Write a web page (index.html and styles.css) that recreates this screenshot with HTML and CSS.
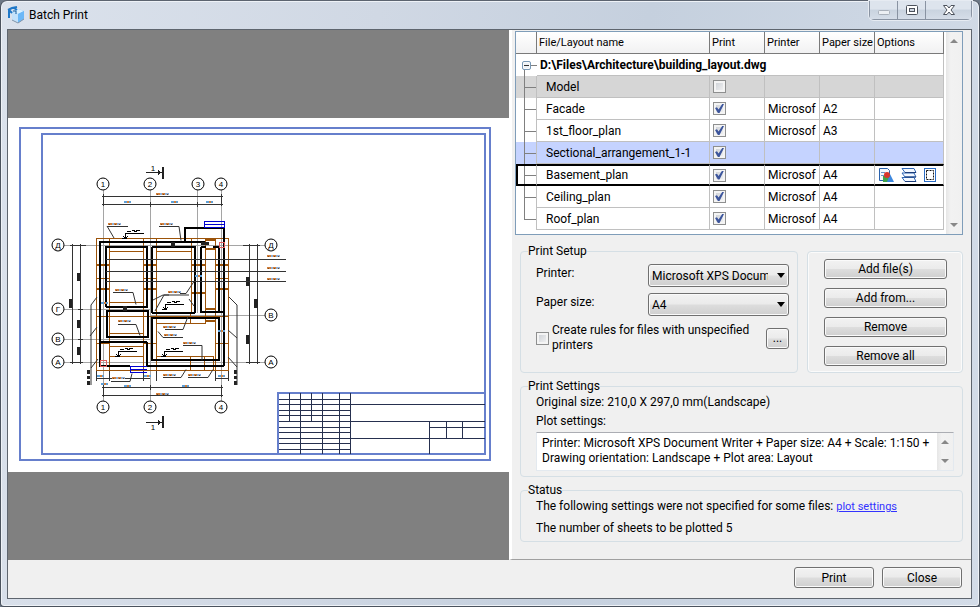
FILE: index.html
```
<!DOCTYPE html>
<html lang="en">
<head>
  <title>Batch Print</title>
  <meta charset="UTF-8">
  <meta name="viewport" content="width=device-width, initial-scale=1.0">
  <link rel="stylesheet" href="styles.css">
</head>
<body>
  <div class="window">
    <header class="titlebar">
      <svg class="app-icon" width="18" height="18" viewBox="0 0 18 18">
        <path d="M5 6l6-3 6 2v8l-6 4-6-3z" fill="#7cc4fa"/>
        <path d="M5 6l6-3 6 2-6 3z" fill="#d9f0ff"/>
        <path d="M5 6l6 2v9l-6-3z" fill="#c3e2fb"/>
        <path d="M11 8l6-3v8l-6 4z" fill="#6bb8f7"/>
        <path d="M1 4l4-2 5-1M2 3v9M2 4l3 3M7 2l3 2M1 11h2" fill="none" stroke="#1f78c8" stroke-width="2"/>
        <path d="M6 5h3v3" fill="none" stroke="#155a9c"/>
        <path d="M5 14l6 3 6-4" fill="none" stroke="#8595a8"/>
      </svg>
      <h1>Batch Print</h1>
      <div class="caption-buttons">
        <button type="button" aria-label="Minimize" disabled>
          <svg width="14" height="12" viewBox="0 0 14 12"><rect x="1.5" y="6.5" width="11" height="4" rx="1" fill="#eceff3" stroke="#a9b0ba"/></svg>
        </button>
        <button type="button" aria-label="Maximize">
          <svg width="14" height="12" viewBox="0 0 14 12"><rect x="1.5" y="1.5" width="11" height="9" rx="1" fill="#fff" stroke="#4c525c"/><rect x="4.5" y="4.5" width="5" height="3" fill="#d0d7e2" stroke="#4c525c"/></svg>
        </button>
        <button type="button" class="close" aria-label="Close window">
          <svg width="14" height="12" viewBox="0 0 14 12"><path d="M1.500 1.500h3.500l2 2.500 2-2.500h3.500l-3.500 4.500 3.500 4.500h-3.500l-2-2.500-2 2.500h-3.500l3.500-4.500z" fill="#fff" stroke="#4c525c"/></svg>
        </button>
      </div>
    </header>

    <main class="client">
      <div class="panes">
        <section class="preview">
          <svg class="sheet" viewBox="8 118 501 354" role="img" aria-label="Basement plan preview">
            <defs>
              <g id="mark" fill="none">
                <path d="M0 0h4M6 0h3" stroke="#d2803c" stroke-width="2"/>
                <path d="M4 0h2M9 0h4" stroke="#8fb0d8" stroke-width="2"/>
                <path d="M1 .5h1M7 .5h1M11 .5h1" stroke="#7a4a20"/>
              </g>
              <g id="dim" fill="none">
                <path d="M0 0h3M5 0h2" stroke="#5fa0d8" stroke-width="2"/>
                <path d="M3 0h2" stroke="#d2803c" stroke-width="2"/>
              </g>
              <g id="level">
                <path d="M0 5.500h5M3.500 0v5M3 .5h19M1 3l2.500 2 2.500-2" fill="none" stroke="#000"/>
                <path d="M5-1.500h4M10-2.500h2v1h2v-1h4" fill="none" stroke="#000"/>
              </g>
            </defs>
            <rect class="paper" x="8" y="118" width="501" height="354"/>

            <!-- frame -->
            <g class="frame">
              <rect x="20" y="128" width="470" height="332"/>
              <path d="M42 134H485V454H42zM278 454V393H485"/>
            </g>

            <!-- title block -->
            <path class="stamp" d="M289.500 393v28M300.500 393v61M311.500 393v28M322.500 393v61M339.500 393v61M350.500 393v61
              M279 399.500h71M279 404.500h206M279 410.500h71M279 415.500h71M279 421.500h206M279 427.500h71M279 432.500h71
              M279 438.500h206M279 443.500h71M279 449.500h71M429.500 421v33M446.500 421v17M462.500 421v17M429 427.500h56"/>

            <!-- axes -->
            <path class="axis" d="M103.500 190v211M150.500 190v211M197.500 190v123M221.500 190v211
              M64 245.500h201M64 309.500h87M64 339.500h87M64 362.500h201M150 315.500h115"/>

            <!-- dimension chains -->
            <path class="thin" d="M102 196.500h121M102 204.500h121M103.500 194v12M150.500 202v5M197.500 202v5M221.500 194v12
              M102 387.500h121M102 395.500h121M103.500 385v12M150.500 385v5M221.500 385v12
              M72.500 244v120M80.500 244v120M249.500 244v120M257.500 244v120
              M70 245.500h16M78 309.500h5M78 339.500h5M70 362.500h13M243 245.500h17M246 362.500h14M96 378.500h54M216 378.500h13
              M96.500 371v10M109.500 371v10M143.500 371v10M156.500 371v10M215.500 371v10M228.500 371v10"/>
            <path class="blocks" d="M77 273h3v8h-3zM69 299h3v9h-3zM77 320h3v8h-3zM77 347h3v8h-3zM246 277h4v9h-4zM254 299h4v9h-4zM246 335h3v9h-3z
              M87 370h3v4h-3zM87 376h3v3h-3zM87 381h3v4h-3zM234 370h3v4h-3zM234 376h3v3h-3zM234 381h3v4h-3z"/>

            <!-- timber -->
            <path class="timber" d="M96.500 238.500H228.500V370.500H96.500zM109.500 238v132M143.500 238v132M156.500 238v132M191.500 238v75M205.500 238v85M215.500 238v132
              M109 251.500h34M156 251.500h35M96 278.500h13M143 278.500h13M215 278.500h13M96 316.500h132M109 302.500h34M109 333.500h34M109 346.500h34
              M109 356.500h34M156 323.500h50M156 356.500h58M190.500 357v13M204.500 357v13M213.500 357v13M96 343.500h13M143 343.500h13M215 343.500h13M190.500 313v10"/>
            <path class="timber beam" d="M96 265h13M143 265h13M191 265h14M215 265h13M96 289h13M143 289h13M191 293h14M215 289h13M206 309h9M206 312h9M206 240h9M206 249h9M206 321h9"/>

            <!-- walls -->
            <path class="wall" d="M100 241v101M99 242h86M106 246v61M106 247h41M147 246v61M106 307h42M152 247v66M152 247h43M152 313h43M195 246v67
              M107 311h41v26h-41zM99 342h48M100 342v24M147 342v24M99 366h31M147 366h77M224 227v139M185 228h39M185 227v15M185 242h20
              M201 247v66M201 312h23M219 247v66M201 247h5M213 247h6M152 318h67v42h-67z"/>
            <path class="floor" d="M106 259.500h180M106 271.500h180M106 281.500h180"/>
            <path class="window-line" d="M204.500 221.500h20v6h-20zM204 224.500h20M130 366.500h17M130 369.500h17M130 372.500h17M130.500 366v7"/>
            <path class="blocks" d="M171 242h4v5h-4zM201 242h8v3h-8zM123 306h4v5h-4z"/>
            <rect class="origin" x="219.500" y="242.500" width="5" height="5"/>
            <rect class="origin" x="100.500" y="360.500" width="6" height="6"/>

            <!-- leaders -->
            <path class="leader" d="M107 226.500h21M107 226l7 12M159 226.500h20l2 14M113 292.500h20l3 12M155 311l9-16h25M180 293.500h6l8-12M118 324.500h18l4 11
              M165 329.500h18l5-13M183 337.500h-20l-5-6M183 345.500h19v15M111 381.500h19l2-8M163 377.500h18l5-8M188 377.500h20l5-8
              M97 297l-6 8v80M90 336l7-9M91 368l7-9M229 297l8 8v80M228 330l9 8M228 357l9 10M189 299l5 7M153 300l10-5 6 0"/>
            <g>
              <use href="#mark" x="108" y="224"/><use href="#mark" x="160" y="224"/>
              <use href="#mark" x="267" y="256"/><use href="#mark" x="267" y="268"/><use href="#mark" x="267" y="279"/>
              <use href="#mark" x="115" y="290"/><use href="#mark" x="168" y="292"/><use href="#mark" x="118" y="321"/>
              <use href="#mark" x="163" y="327"/><use href="#mark" x="164" y="335"/><use href="#mark" x="183" y="343"/>
              <use href="#mark" x="112" y="378"/><use href="#mark" x="163" y="375"/><use href="#mark" x="188" y="375"/>
              <use href="#dim" x="124" y="202"/><use href="#dim" x="171" y="202"/><use href="#dim" x="206" y="202"/>
              <use href="#mark" x="156" y="194"/><use href="#mark" x="156" y="394"/><use href="#dim" x="124" y="386"/><use href="#dim" x="182" y="386"/>
              <use href="#dim" x="97" y="376"/><use href="#dim" x="144" y="376"/><use href="#dim" x="218" y="376"/>
              <use href="#dim" x="101" y="303"/><use href="#dim" x="218" y="331"/><use href="#dim" x="195" y="276"/><use href="#dim" x="101" y="384"/>
              <use href="#level" x="122" y="233"/><use href="#level" x="162" y="304"/><use href="#level" x="115" y="351"/><use href="#level" x="161" y="351"/>
            </g>

            <!-- section marks -->
            <path class="blocks" d="M146 172h12v-2l4 2.500-4 2.500v-2h-12zM162 167h2v12h-2zM146 422h12v-2l4 2.500-4 2.500v-2h-12zM162 416h2v12h-2z"/>
            <g class="axis-label">
              <text x="153" y="171">1</text><text x="153" y="430">1</text>
            </g>

            <g class="bubbles">
              <circle cx="103" cy="184" r="6"/><circle cx="150" cy="184" r="6"/><circle cx="198" cy="184" r="6"/><circle cx="221" cy="184" r="6"/>
              <circle cx="103" cy="407" r="6"/><circle cx="150" cy="407" r="6"/><circle cx="221" cy="407" r="6"/>
              <circle cx="58" cy="245" r="6"/><circle cx="58" cy="309" r="6"/><circle cx="58" cy="339" r="6"/><circle cx="58" cy="362" r="6"/>
              <circle cx="271" cy="245" r="6"/><circle cx="271" cy="315" r="6"/><circle cx="271" cy="362" r="6"/>
            </g>
            <g class="axis-label">
              <text x="103" y="187">1</text><text x="150" y="187">2</text><text x="198" y="187">3</text><text x="221" y="187">4</text>
              <text x="103" y="410">1</text><text x="150" y="410">2</text><text x="221" y="410">4</text>
              <text x="58" y="248">Д</text><text x="58" y="312">Г</text><text x="58" y="342">В</text><text x="58" y="365">А</text>
              <text x="271" y="248">Д</text><text x="271" y="318">В</text><text x="271" y="365">А</text>
            </g>
          </svg>
        </section>

        <section class="side">
          <div class="list-box">
            <table class="layouts">
              <thead>
                <tr>
                  <th class="col-tree"></th>
                  <th>File/Layout name</th>
                  <th class="col-print">Print</th>
                  <th class="col-printer">Printer</th>
                  <th class="col-paper">Paper size</th>
                  <th class="col-options">Options</th>
                </tr>
              </thead>
              <tbody>
                <tr class="file">
                  <td class="tree root"><button type="button" class="toggle" aria-label="Collapse"></button></td>
                  <td colspan="5">D:\Files\Architecture\building_layout.dwg</td>
                </tr>
                <tr class="model">
                  <td class="tree"></td><td class="name">Model</td>
                  <td><input type="checkbox" aria-label="Print Model"></td><td></td><td></td><td></td>
                </tr>
                <tr>
                  <td class="tree"></td><td class="name">Facade</td>
                  <td><input type="checkbox" aria-label="Print Facade" checked></td><td>Microsof</td><td>A2</td><td></td>
                </tr>
                <tr>
                  <td class="tree"></td><td class="name">1st_floor_plan</td>
                  <td><input type="checkbox" aria-label="Print 1st_floor_plan" checked></td><td>Microsof</td><td>A3</td><td></td>
                </tr>
                <tr class="unset">
                  <td class="tree"></td><td class="name">Sectional_arrangement_1-1</td>
                  <td><input type="checkbox" aria-label="Print Sectional_arrangement_1-1" checked></td><td></td><td></td><td></td>
                </tr>
                <tr class="current">
                  <td class="tree"></td><td class="name">Basement_plan</td>
                  <td><input type="checkbox" aria-label="Print Basement_plan" checked></td><td>Microsof</td><td>A4</td>
                  <td>
                    <div class="options">
                      <svg width="16" height="16" viewBox="0 0 16 16">
                        <path d="M1.500 1.500h8l2 2v10h-10z" fill="#f4f8fd" stroke="#2a62ad"/>
                        <path d="M3 5.500h4M3 8.500h3" stroke="#6c93c6"/>
                        <path d="M5 9h6v6H5z" fill="#3fa34a"/><path d="M12 7l4 8H9z" fill="#3d87dd"/>
                        <circle cx="9" cy="8" r="3" fill="#d8352c"/>
                      </svg>
                      <svg width="16" height="16" viewBox="0 0 16 16">
                        <path d="M1 10.500l3 4h11l-2-4zM1 6l3 4h11l-2-4zM1 1.500l3 4h11l-2-4z" fill="#f3f8ff" stroke="#2f66b5"/>
                        <path d="M4 5.500h11M4 10h11M4 14.500h11" stroke="#1d3c78"/>
                      </svg>
                      <svg width="12" height="16" viewBox="0 0 12 16">
                        <rect x=".5" y="1.500" width="11" height="13" fill="#fff" stroke="#2b6cc4"/>
                        <rect x="2.500" y="3.500" width="7" height="9" fill="none" stroke="#111" stroke-dasharray="2 1"/>
                      </svg>
                    </div>
                  </td>
                </tr>
                <tr>
                  <td class="tree"></td><td class="name">Ceiling_plan</td>
                  <td><input type="checkbox" aria-label="Print Ceiling_plan" checked></td><td>Microsof</td><td>A4</td><td></td>
                </tr>
                <tr>
                  <td class="tree last"></td><td class="name">Roof_plan</td>
                  <td><input type="checkbox" aria-label="Print Roof_plan" checked></td><td>Microsof</td><td>A4</td><td></td>
                </tr>
              </tbody>
            </table>
            <div class="scrollbar"><i class="up"></i><i class="down"></i></div>
          </div>

          <div class="groups">
            <div class="setup-row">
              <fieldset class="setup">
                <legend>Print Setup</legend>
                <div class="field">
                  <label for="printer">Printer:</label>
                  <span class="combo"><select id="printer"><option>Microsoft XPS Document Writer</option></select></span>
                </div>
                <div class="field">
                  <label for="paper">Paper size:</label>
                  <span class="combo"><select id="paper"><option>A4</option></select></span>
                </div>
                <div class="rules">
                  <input type="checkbox" id="rules">
                  <label for="rules">Create rules for files with unspecified printers</label>
                  <button type="button" class="more">...</button>
                </div>
              </fieldset>
              <div class="file-actions">
                <button type="button">Add file(s)</button>
                <button type="button">Add from...</button>
                <button type="button">Remove</button>
                <button type="button">Remove all</button>
              </div>
            </div>

            <fieldset class="settings">
              <legend>Print Settings</legend>
              <p>Original size: 210,0 X 297,0 mm(Landscape)</p>
              <label for="plot">Plot settings:</label>
              <div class="plot-box">
                <textarea id="plot" rows="2" readonly>Printer: Microsoft XPS Document Writer + Paper size: A4 + Scale: 1:150 +
Drawing orientation: Landscape + Plot area: Layout</textarea>
                <div class="scrollbar"><i class="up"></i><i class="down"></i></div>
              </div>
            </fieldset>

            <fieldset class="status">
              <legend>Status</legend>
              <p>The following settings were not specified for some files: <a href="#plot">plot settings</a></p>
              <p>The number of sheets to be plotted 5</p>
            </fieldset>
          </div>
        </section>
      </div>

      <footer class="actions">
        <button type="button">Print</button>
        <button type="button">Close</button>
      </footer>
    </main>
  </div>
</body>
</html>
```
FILE: styles.css
```
* {
  box-sizing: border-box;
}
body {
  margin: 0;
  background: #6d7886;
  color: #000;
  font: 12px/16px Roboto, "Open Sans", sans-serif;
}
button, select, textarea {
  font: inherit;
  color: inherit;
}
p {
  margin: 0;
}
.window {
  display: flex;
  flex-direction: column;
  min-height: 100vh;
  padding: 0 7px 7px 6px;
  border: 1px solid #4b535e;
  border-top-color: #5c6470;
  border-radius: 7px 7px 4px 4px;
  background: linear-gradient(100deg, #dbe2ec 0%, #d0d8e4 35%, #c5d0de 60%, #d3dce8 100%);
  box-shadow: inset 0 0 0 1px #eef2f7;
}
.titlebar {
  display: flex;
  align-items: center;
  gap: 4px;
  height: 28px;
}
.titlebar h1 {
  flex: 1;
  margin: 0;
  font-size: 12px;
  font-weight: 400;
}
.caption-buttons {
  display: flex;
  align-self: flex-start;
  border: 1px solid #8993a2;
  border-top: none;
  border-radius: 0 0 5px 5px;
  box-shadow: 0 0 0 1px #e6ebf2;
}
.caption-buttons button {
  display: flex;
  align-items: center;
  justify-content: center;
  width: 28px;
  height: 18px;
  padding: 0;
  border: none;
  border-right: 1px solid #8993a2;
  border-radius: 0;
  background: linear-gradient(#dde4ed 45%, #c9d3df 50%, #d5dde8);
  box-shadow: none;
}
.caption-buttons .close {
  width: 45px;
  border-right: none;
}
.client {
  flex: 1;
  display: flex;
  flex-direction: column;
  border: 1px solid #5e656e;
  background: #f0f0f0;
}
.panes {
  flex: 1;
  display: flex;
}

/* preview */
.preview {
  flex: 1;
  display: flex;
  align-items: center;
  background: #808080;
}
.sheet {
  width: 100%;
  shape-rendering: crispEdges;
}
.paper { fill: #fff; }
.frame { fill: none; stroke: #667fcc; stroke-width: 2; }
.stamp { fill: none; stroke: #26304f; }
.axis { fill: none; stroke: #a5a5a5; }
.thin, .leader, .floor { fill: none; stroke: #333; }
.leader { shape-rendering: auto; }
.blocks { fill: #222; }
.timber { fill: none; stroke: #9c5309; }
.beam { stroke-width: 2; }
.wall { fill: none; stroke: #000; stroke-width: 2; }
.window-line { fill: none; stroke: #0000d0; }
.origin { fill: none; stroke: #e06060; }
.bubbles { fill: #fff; stroke: #000; shape-rendering: auto; }
.axis-label {
  font: 8px "Liberation Sans", sans-serif;
  text-anchor: middle;
}

/* layouts list */
.side {
  width: 462px;
  padding: 1px 8px 0 3px;
  border-left: 3px solid #fff;
  border-bottom: 1px solid #a0a0a0;
}
.list-box {
  display: flex;
  gap: 2px;
  padding-bottom: 4px;
  border: 1px solid #7f9db9;
  background: #fff;
}
.layouts {
  flex: 1;
  width: 100%;
  table-layout: fixed;
  border-collapse: separate;
  border-spacing: 0;
}
.layouts tr {
  height: 22px;
}
.layouts th, .layouts td {
  height: 22px;
  padding: 0 0 0 3px;
  border-right: 1px solid #c0c0c0;
  border-bottom: 1px solid #c0c0c0;
  text-align: left;
  white-space: nowrap;
  overflow: hidden;
}
.layouts th {
  padding-left: 2px;
  border-color: #7a7a7a;
  background: linear-gradient(#fff, #f1f1f2);
  font-size: 11px;
  font-weight: 400;
}
.col-tree { width: 21px; }
.col-print, .col-printer, .col-paper { width: 55px; }
.col-options { width: 69px; }
.layouts .name {
  padding-left: 9px;
}
.file td {
  font-weight: 700;
}
.layouts .tree {
  position: relative;
  padding: 0;
  border-bottom: none;
}
.layouts .root {
  border-right: none;
}
.tree::before, .tree::after {
  content: "";
  position: absolute;
  left: 8px;
  background: #808080;
}
.tree::before {
  top: 0;
  width: 1px;
  height: 22px;
}
.tree::after {
  top: 11px;
  width: 13px;
  height: 1px;
}
.root::before {
  top: 11px;
}
.last::before {
  height: 11px;
}
.toggle {
  position: relative;
  z-index: 1;
  display: block;
  width: 9px;
  height: 9px;
  margin: 0 6px;
  padding: 0;
  border: 1px solid #7898b5;
  border-radius: 2px;
  background: linear-gradient(#333, #333) center / 5px 1px no-repeat #eef2f6;
}
.model td {
  background: #d6d6d6;
}
.unset td {
  background: #c5d3ff;
}
.layouts .current td {
  border-top: 2px solid #000;
  border-bottom: 2px solid #000;
}
.layouts .current .tree {
  border-left: 2px solid #000;
}
.current .tree::before, .current .tree::after {
  left: 6px;
}
.current .tree::before {
  top: -2px;
}
.current .tree::after {
  top: 9px;
}
.options {
  display: flex;
  justify-content: space-between;
  padding-right: 7px;
}
input[type="checkbox"] {
  appearance: none;
  display: block;
  flex: none;
  width: 13px;
  height: 13px;
  margin: 0;
  border: 1px solid #8e8f8f;
  background: linear-gradient(135deg, #c9cdd3, #f6f6f6);
  box-shadow: inset 0 0 0 2px #f4f4f4;
}
input[type="checkbox"]:checked::before {
  content: "";
  display: block;
  width: 9px;
  height: 9px;
  margin: 1px;
  background: #3c559c;
  clip-path: polygon(0 45%, 22% 35%, 40% 62%, 80% 0, 100% 0, 50% 100%, 32% 100%);
}
.scrollbar {
  display: flex;
  flex-direction: column;
  justify-content: space-between;
  align-items: center;
  width: 16px;
  padding: 7px 0;
  background: linear-gradient(90deg, #e6e6e6, #f2f2f2 30%, #f0f0f0);
}
.list-box .scrollbar {
  margin-bottom: -4px;
}
.scrollbar i {
  border: 4px solid transparent;
}
.scrollbar .up {
  border-top: none;
  border-bottom-color: #888;
}
.scrollbar .down {
  border-bottom: none;
  border-top-color: #888;
}

/* groups */
.groups {
  display: flex;
  flex-direction: column;
  gap: 5px;
  padding: 8px 0 0 5px;
}
fieldset, .file-actions {
  min-width: 0;
  margin: 0;
  border: 1px solid #d5dfe5;
  border-radius: 4px;
  box-shadow: inset 0 0 0 1px #fbfbfb;
}
fieldset {
  padding: 0 8px 5px 15px;
  box-shadow: none;
}
legend {
  margin-left: -8px;
  padding: 0;
}
.setup-row {
  display: flex;
  gap: 9px;
}
.setup {
  flex: 1;
}
.field {
  display: flex;
  justify-content: space-between;
  margin: 5px 0 6px;
}
.field label {
  padding-top: 1px;
}
.combo {
  position: relative;
  width: 141px;
}
.combo::after {
  content: "";
  position: absolute;
  right: 4px;
  top: 9px;
  border: 4px solid transparent;
  border-top: 5px solid #000;
  border-bottom: none;
  pointer-events: none;
}
select, button {
  border: 1px solid #707070;
  border-radius: 3px;
  background: linear-gradient(#f2f2f2, #ebebeb 48%, #dddddd 52%, #cfcfcf);
  box-shadow: inset 0 0 0 1px #fafafa;
}
select {
  appearance: none;
  display: block;
  width: 100%;
  height: 23px;
  padding: 0 20px 0 3px;
}
.rules {
  display: flex;
  align-items: center;
  gap: 3px;
  margin-top: 7px;
  line-height: 15px;
}
.rules label {
  flex: 1;
}
.more {
  width: 23px;
  height: 21px;
  padding: 0;
  line-height: 15px;
}
.file-actions {
  display: flex;
  flex-direction: column;
  gap: 9px;
  width: 156px;
  margin-top: 8px;
  padding: 7px 15px 6px 16px;
}
.file-actions button {
  height: 20px;
  padding: 0;
}
.settings p, .settings label {
  display: block;
  margin-bottom: 3px;
}
.plot-box {
  display: flex;
  height: 39px;
  border: 1px solid #e3e9ef;
  border-top-color: #abadb3;
  background: #fff;
}
textarea {
  flex: 1;
  padding: 3px 5px;
  border: none;
  outline: none;
  background: none;
  resize: none;
  overflow: hidden;
  line-height: 15px;
}
.status p {
  margin-bottom: 5px;
}
.status {
  padding-bottom: 0;
}
a {
  color: #3333ff;
  font-size: 11px;
}
.actions {
  display: flex;
  justify-content: flex-end;
  gap: 8px;
  padding: 7px 9px 10px;
}
.actions button {
  width: 80px;
  height: 21px;
  padding: 0;
  line-height: 18px;
}
```
